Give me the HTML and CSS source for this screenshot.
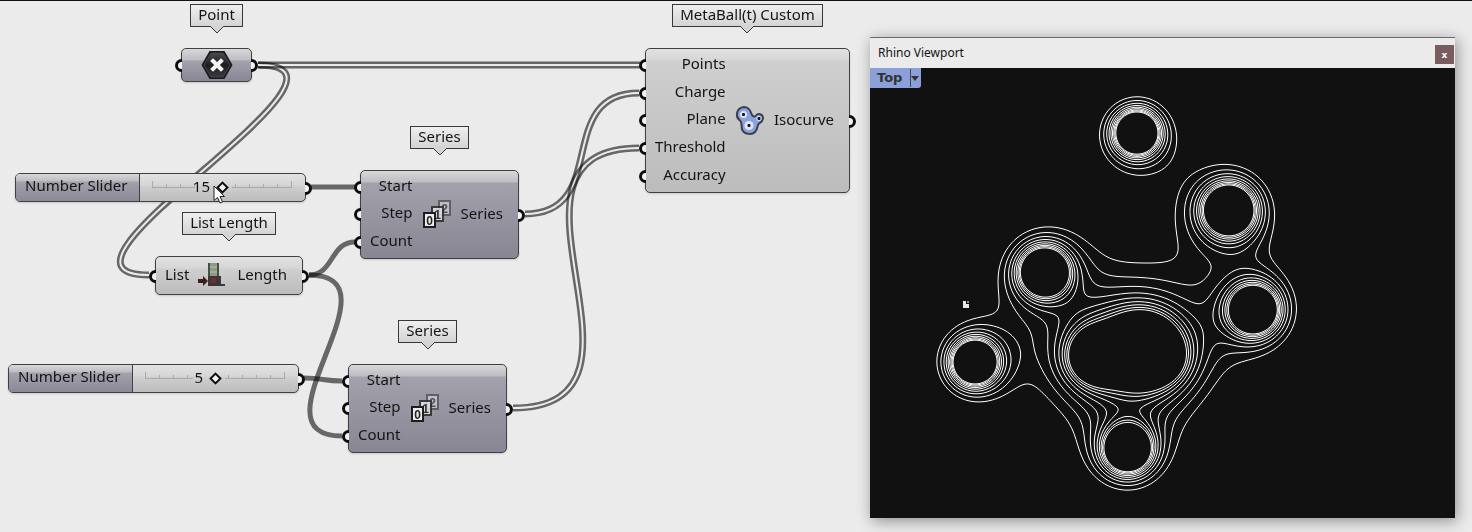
FILE: index.html
```html
<!DOCTYPE html>
<html lang="en">
<head>
<meta charset="utf-8">
<title>MetaBall isocurves</title>
<link rel="stylesheet" href="styles.css">
</head>
<body>
<main class="canvas">
  <svg class="wires" aria-hidden="true">
    <g class="wire"><path class="wire-double" d="M258 65H640"/><path class="wire-core" d="M258 65H640"/></g>
    <g class="wire"><path class="wire-double" d="M258 65C390 65 17 275 149 275"/><path class="wire-core" d="M258 65C390 65 17 275 149 275"/></g>
    <g class="wire"><path class="wire-double" d="M525 214C611 214 553 93 639 93"/><path class="wire-core" d="M525 214C611 214 553 93 639 93"/></g>
    <g class="wire"><path class="wire-double" d="M513 408C680 408 472 148 639 148"/><path class="wire-core" d="M513 408C680 408 472 148 639 148"/></g>
    <g class="wire"><path class="wire-single" d="M311 187H355"/></g>
    <g class="wire"><path class="wire-single" d="M309 275C334 275 330 242 355 242"/></g>
    <g class="wire"><path class="wire-single" d="M309 275C405 275 246 436 342 436"/></g>
    <g class="wire"><path class="wire-single" d="M304 378C323 378 323 381 342 381"/></g>
  </svg>

  <section class="item at-point">
    <h2 class="tag">Point<svg class="tip" viewBox="0 0 14 8"><path d="M0 0L7 7L14 0"/></svg></h2>
    <div class="node node-point dim">
      <i class="port port-in"></i>
      <svg class="hex" viewBox="0 0 32 30">
        <defs><linearGradient id="hexfill" x1="0" y1="0" x2="0" y2="1"><stop offset="0" stop-color="#4a4a4f"/><stop offset=".5" stop-color="#1d1d20"/><stop offset="1" stop-color="#3a3a3e"/></linearGradient></defs>
        <path d="M.5 15L8.500 1H23.500L31.500 15L23.500 29H8.500Z" fill="#1b1b1d"/>
        <path d="M3 15L10 3H22L29 15L22 27H10Z" fill="url(#hexfill)" stroke="#45454a"/>
        <path d="M12 11L20 19M20 11L12 19" stroke="#f4f4f4" stroke-width="4" stroke-linecap="square"/>
      </svg>
      <i class="port port-out"></i>
    </div>
  </section>

  <section class="item at-meta">
    <h2 class="tag">MetaBall(t) Custom<svg class="tip" viewBox="0 0 14 8"><path d="M0 0L7 7L14 0"/></svg></h2>
    <div class="node node-meta">
      <ul class="inputs">
        <li><i class="port port-in"></i>Points</li>
        <li><i class="port port-in"></i>Charge</li>
        <li><i class="port port-in"></i>Plane</li>
        <li><i class="port port-in"></i>Threshold</li>
        <li><i class="port port-in"></i>Accuracy</li>
      </ul>
      <svg class="icon" viewBox="0 0 30 30">
        <path d="M9 1C14 1 15.500 5 17 9C18 11 20 11 21 9.500C23 7 28 8 28 12C28 16 25 16.500 23.500 18C22 20 23 23 20 26C17 29 10 28.500 7.500 24.500C5.500 21 8 17 5 14.500C0 11 1 2 9 1Z" fill="#8ba3dc" stroke="#3c3f4c" stroke-width="2"/>
        <g fill="#dfe5f6"><circle cx="8.500" cy="8.500" r="3.500"/><circle cx="14" cy="19.500" r="4.500"/><circle cx="24" cy="12.500" r="2.500"/></g>
        <path d="M7 8.500H10M8.500 7V10M12.500 19.500H15.500M14 18V21M22.500 12.500H25.500M24 11V14" stroke="#16181f" stroke-width="2"/>
      </svg>
      <ul class="outputs"><li>Isocurve<i class="port port-out"></i></li></ul>
    </div>
  </section>

  <section class="item at-series-a">
    <h2 class="tag">Series<svg class="tip" viewBox="0 0 14 8"><path d="M0 0L7 7L14 0"/></svg></h2>
    <div class="node node-series dim">
      <ul class="inputs">
        <li><i class="port port-in"></i>Start</li>
        <li><i class="port port-in"></i>Step</li>
        <li><i class="port port-in"></i>Count</li>
      </ul>
      <svg class="icon" viewBox="0 0 30 30">
        <g opacity=".6"><rect x="17" y="1" width="11" height="14" fill="#d8d8dc" stroke="#3a3a40" stroke-width="2"/><text class="digit" x="22.500" y="13">2</text></g>
        <g opacity=".85"><rect x="10" y="7" width="11" height="14" fill="#e0e0e3" stroke="#2a2a2e" stroke-width="2"/><text class="digit" x="15.500" y="19">1</text></g>
        <rect x="2" y="13" width="11" height="14" fill="#ececee" stroke="#1d1d20" stroke-width="2"/><text class="digit" x="7.500" y="25">0</text>
      </svg>
      <ul class="outputs"><li>Series<i class="port port-out"></i></li></ul>
    </div>
  </section>

  <section class="item at-list">
    <h2 class="tag">List Length<svg class="tip" viewBox="0 0 14 8"><path d="M0 0L7 7L14 0"/></svg></h2>
    <div class="node node-list">
      <ul class="inputs"><li><i class="port port-in"></i>List</li></ul>
      <svg class="icon" viewBox="0 0 30 30">
        <path d="M11 2V24M20 2V24" stroke="#4b4d4a" stroke-width="2"/>
        <path d="M12 2H19V15H12Z" fill="#8b9c80"/><path d="M12 6H19M12 11H19" stroke="#b9c4b2" stroke-width="1"/>
        <path d="M10 15H21V25H10Z" fill="#3b3634"/><rect x="13" y="17" width="5" height="5" fill="#6a3130"/>
        <path d="M0 18H5V15L10 20L5 25V22H0Z" fill="#3a1f1d"/>
        <path d="M22 15V24H27" fill="none" stroke="#3a3a3c" stroke-width="2"/>
      </svg>
      <ul class="outputs"><li>Length<i class="port port-out"></i></li></ul>
    </div>
  </section>

  <section class="item at-series-b">
    <h2 class="tag">Series<svg class="tip" viewBox="0 0 14 8"><path d="M0 0L7 7L14 0"/></svg></h2>
    <div class="node node-series dim">
      <ul class="inputs">
        <li><i class="port port-in"></i>Start</li>
        <li><i class="port port-in"></i>Step</li>
        <li><i class="port port-in"></i>Count</li>
      </ul>
      <svg class="icon" viewBox="0 0 30 30">
        <g opacity=".6"><rect x="17" y="1" width="11" height="14" fill="#d8d8dc" stroke="#3a3a40" stroke-width="2"/><text class="digit" x="22.500" y="13">2</text></g>
        <g opacity=".85"><rect x="10" y="7" width="11" height="14" fill="#e0e0e3" stroke="#2a2a2e" stroke-width="2"/><text class="digit" x="15.500" y="19">1</text></g>
        <rect x="2" y="13" width="11" height="14" fill="#ececee" stroke="#1d1d20" stroke-width="2"/><text class="digit" x="7.500" y="25">0</text>
      </svg>
      <ul class="outputs"><li>Series<i class="port port-out"></i></li></ul>
    </div>
  </section>

  <div class="item node slider at-slider-a">
    <label class="slider-name" for="slider-a">Number Slider</label>
    <div class="slider-body">
      <svg class="ticks" viewBox="0 0 140 8"><path d="M.5 0V7M14.500 3V7M28.500 3V7M42.500 3V7M83.500 3V7M97.500 3V7M111.500 3V7M125.500 3V7M139.500 0V7M0 6.500H42M80 6.500H140"/></svg>
      <output class="value" for="slider-a">15</output>
      <input class="range" id="slider-a" type="range" min="0" max="30" value="15">
    </div>
    <i class="port port-out"></i>
  </div>

  <div class="item node slider at-slider-b">
    <label class="slider-name" for="slider-b">Number Slider</label>
    <div class="slider-body">
      <svg class="ticks" viewBox="0 0 140 8"><path d="M.5 0V7M14.500 3V7M28.500 3V7M42.500 3V7M83.500 3V7M97.500 3V7M111.500 3V7M125.500 3V7M139.500 0V7M0 6.500H48M80 6.500H140"/></svg>
      <output class="value" for="slider-b">5</output>
      <input class="range" id="slider-b" type="range" min="0" max="10" value="5">
    </div>
    <i class="port port-out"></i>
  </div>

  <svg class="pointer" viewBox="0 0 13 19"><path d="M1 1V15.500L4.500 12.500L7 18L9.500 17L7 11.500H11.500Z" fill="#fff" stroke="#222"/></svg>
</main>

<section class="window">
  <header class="titlebar">
    <h1 class="title">Rhino Viewport</h1>
    <button class="close" type="button" aria-label="Close">x</button>
  </header>
  <div class="viewport">
    <button class="view-name" type="button"><span class="view-label">Top</span><svg class="caret" viewBox="0 0 8 5"><path d="M0 0H8L4 5Z"/></svg></button>
    <svg class="isocurves" viewBox="0 0 585 450">
      <path class="curve" id="curves"/>
      <path d="M93 233H96V236H99V240H93Z" fill="#e8e8e8"/><path d="M97 233H99V235H97Z" fill="#8c8c8c"/>
    </svg>
  </div>
</section>
<script src="metaball.js"></script>
</body>
</html>
```
FILE: styles.css
```css
*{box-sizing:border-box}
body{margin:0;background:#ebebeb;color:#141414;font:15px/20px "Noto Sans","Open Sans",sans-serif;min-height:100vh;position:relative;overflow:hidden}
h1,h2,ul{margin:0;padding:0;font-weight:400;font-size:inherit;list-style:none}
button{font:inherit;border:0;padding:0;cursor:pointer}

.canvas{min-height:100vh;border-top:1px solid #111}
.wires{position:absolute;left:0;top:0;width:100%;height:100%}
.wire{mix-blend-mode:multiply;fill:none}
.wire-double{stroke:#707070;stroke-width:7}
.wire-core{stroke:#fff;stroke-width:2}
.wire-single{stroke:#707070;stroke-width:5}

.item{position:absolute}
section.item{display:flex;flex-direction:column;align-items:center;gap:21px}
.at-point{left:181px;top:4px}
.at-meta{left:645px;top:4px}
.at-series-a{left:360px;top:126px}
.at-list{left:155px;top:212px}
.at-series-b{left:348px;top:320px}
.at-slider-a{left:15px;top:173px}
.at-slider-b{left:8px;top:364px}

.tag{position:relative;height:23px;padding:0 7px;line-height:18px;white-space:nowrap;border:1px solid #37373d;background:linear-gradient(#efefef,#d4d4d4)}
.tip{position:absolute;left:50%;top:100%;width:14px;height:8px;margin-left:-7px;fill:#d4d4d4;stroke:#37373d;overflow:visible}

.node{display:flex;align-items:center;border:1px solid #3f3f45;border-radius:5px;background:linear-gradient(#e2e2e2,#d6d6d6 11px,#cfcfcf 12px,#bcbcbc);box-shadow:0 1px 2px rgba(0,0,0,.15)}
.dim{background:linear-gradient(#d8d8da,#bdbdc2 11px,#a2a1ac 12px,#878692)}
section .node{position:relative;justify-content:space-between}
section .node-point{width:71px;height:34px;justify-content:center}
.node-meta{width:205px;height:145px}
.node-series{width:159px;height:89px}
.node-list{width:148px;height:39px}
.node-meta,.node-series{padding:2px 0}
.inputs,.outputs{display:grid;grid-auto-rows:1fr;align-self:stretch;text-align:right}
.inputs li,.outputs li{position:relative;display:flex;align-items:center;justify-content:flex-end;padding:0 0 4px 9px}
.outputs li{padding:0 15px 4px 0}
.icon{width:30px;height:30px;flex:none}
.hex{width:32px;height:30px}
.digit{font:bold 12px "Liberation Sans",sans-serif;text-anchor:middle;fill:#222}

.port{position:absolute;top:50%;width:7px;height:13px;margin-top:-6px;border:3px solid #0c0c0c;background:#f2f2f2}
.port-in{left:-7px;border-right:0;border-radius:7px 0 0 7px}
.port-out{right:-7px;border-left:0;border-radius:0 7px 7px 0}

.slider{width:291px;height:29px}
.slider-name{align-self:stretch;width:124px;padding-left:9px;line-height:23px;white-space:nowrap;border-right:1px solid #3f3f45;border-radius:4px 0 0 4px;background:linear-gradient(#d8d8da,#bdbdc2 7px,#a2a1ac 8px,#8a8995)}
.slider-body{display:grid;width:140px;margin-left:12px;align-items:center}
.slider-body>*{grid-area:1/1}
.ticks{width:140px;height:8px;margin-bottom:6px;fill:none;stroke:#aaa}
.value{width:50%;padding:0 12px 4px 0;text-align:right}
.range{appearance:none;width:100%;height:14px;margin:0;background:none}
.range::-webkit-slider-thumb{appearance:none;width:9px;height:9px;border:2px solid #0c0c0c;background:#f4f4f4;transform:rotate(45deg)}
.pointer{position:absolute;left:213px;top:185px;width:13px;height:19px}

.window{position:absolute;left:870px;right:17px;top:37px;display:flex;flex-direction:column;border-top:1px solid #6b6b6b;box-shadow:2px 3px 14px rgba(0,0,0,.4)}
.titlebar{display:flex;align-items:center;justify-content:space-between;height:30px;padding:0 1px 0 8px;background:#ebebeb}
.title{font-size:12px}
.close{width:19px;height:19px;margin-top:3px;background:#795c60;color:#fff;font:bold 9px/16px "DejaVu Sans",sans-serif}
.viewport{position:relative;background:#111}
.view-name{position:absolute;left:0;top:0;display:flex;align-items:center;height:20px;padding:1px 2px 1px 7px;background:#8b9fd9;color:#333;border-radius:0 0 3px 0}
.view-label{width:34px;text-align:left;font:bold 13px/18px "DejaVu Sans",sans-serif;border-right:1px solid #444}
.caret{width:8px;height:5px;fill:#333}
.isocurves{display:block;width:100%}
.curve{fill:none;stroke:#fff;stroke-width:1}
```
FILE: metaball.js
```js
// Each ball: x, y, charge. The field is the sum of charge / distance^falloff.
const balls = [
  [266.8, 64.8, 5005], [359, 141.9, 6837], [383.7, 241.8, 5968],
  [174.3, 203.7, 5978], [104.6, 294.2, 5204], [257.6, 380.9, 5584],
  [226.7, 287.9, 6122], [271.5, 281.1, 12656], [289.9, 289.2, 2585]
];
const falloff = 1.993;
const thresholds = Array.from({ length: balls.length }, (_, i) => 5 + i);
const width = 585, height = 450, step = 2;

function field(x, y) {
  return balls.reduce((sum, [bx, by, q]) =>
    sum + q / Math.pow((x - bx) ** 2 + (y - by) ** 2 + 0.01, falloff / 2), 0);
}

function trace(level) {
  let d = '';
  for (let x = 0; x < width; x += step) {
    for (let y = 0; y < height; y += step) {
      const corners = [[x, y], [x + step, y], [x + step, y + step], [x, y + step]];
      const values = corners.map(c => field(c[0], c[1]));
      const hits = [];
      for (let k = 0; k < 4; k++) {
        const m = (k + 1) % 4;
        if ((values[k] < level) !== (values[m] < level)) {
          const u = (level - values[k]) / (values[m] - values[k]);
          hits.push((corners[k][0] + u * (corners[m][0] - corners[k][0])).toFixed(2) + ' ' +
                    (corners[k][1] + u * (corners[m][1] - corners[k][1])).toFixed(2));
        }
      }
      for (let k = 0; k + 1 < hits.length; k += 2) d += 'M' + hits[k] + 'L' + hits[k + 1];
    }
  }
  return d;
}

document.getElementById('curves').setAttribute('d', thresholds.map(trace).join(''));
```
